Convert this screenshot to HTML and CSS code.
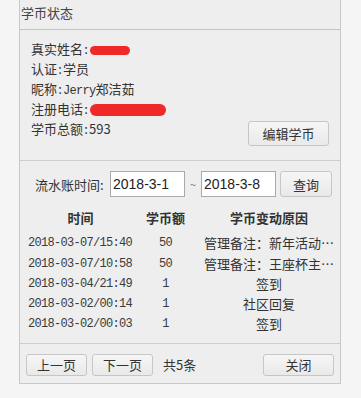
FILE: index.html
```html
<!DOCTYPE html>
<html lang="zh-CN">
<head>
    <meta charset="UTF-8">
    <title>学币状态</title>
    <link rel="stylesheet" href="styles.css">
</head>
<body>
    <div class="panel">
        <div class="panel-title">学币状态</div>
        <div class="info">
            <div class="info-list">
                <div class="info-row">真实姓名<span class="colon">:</span><span class="scribble scribble-name"></span></div>
                <div class="info-row">认证<span class="colon">:</span>学员</div>
                <div class="info-row">昵称<span class="colon">:</span><span class="latin">Jerry</span>郑洁茹</div>
                <div class="info-row">注册电话<span class="colon">:</span><span class="scribble scribble-phone"></span></div>
                <div class="info-row">学币总额<span class="colon">:</span>593</div>
            </div>
            <button class="btn btn-edit">编辑学币</button>
        </div>
        <div class="query">
            <span class="query-label">流水账时间:</span>
            <input class="date-input" type="text" value="2018-3-1">
            <span class="tilde">~</span>
            <input class="date-input" type="text" value="2018-3-8">
            <button class="btn btn-search">查询</button>
        </div>
        <div class="log">
            <div class="log-row log-head">
                <div class="col-time">时间</div>
                <div class="col-amount">学币额</div>
                <div class="col-reason">学币变动原因</div>
            </div>
            <div class="log-row">
                <div class="col-time mono">2018-03-07/15:40</div>
                <div class="col-amount mono">50</div>
                <div class="col-reason">管理备注：新年活动…</div>
            </div>
            <div class="log-row">
                <div class="col-time mono">2018-03-07/10:58</div>
                <div class="col-amount mono">50</div>
                <div class="col-reason">管理备注：王座杯主…</div>
            </div>
            <div class="log-row">
                <div class="col-time mono">2018-03-04/21:49</div>
                <div class="col-amount mono">1</div>
                <div class="col-reason">签到</div>
            </div>
            <div class="log-row">
                <div class="col-time mono">2018-03-02/00:14</div>
                <div class="col-amount mono">1</div>
                <div class="col-reason">社区回复</div>
            </div>
            <div class="log-row">
                <div class="col-time mono">2018-03-02/00:03</div>
                <div class="col-amount mono">1</div>
                <div class="col-reason">签到</div>
            </div>
        </div>
        <div class="pager">
            <button class="btn btn-page">上一页</button>
            <button class="btn btn-page">下一页</button>
            <span class="total">共5条</span>
            <button class="btn btn-close">关闭</button>
        </div>
    </div>
</body>
</html>
```

FILE: styles.css
```css
body {
    margin: 0;
    background-color: #f5f5f5;
    font-family: "Noto Sans CJK SC", sans-serif;
    font-size: 13px;
    color: #333;
}
.panel {
    margin-left: 19px;
    width: 320px;
    border: 1px solid #c8c8c8;
    border-top: none;
    background-color: #eeeeee;
}
.panel-title {
    height: 29px;
    line-height: 26px;
    padding-left: 1px;
    border-bottom: 1px solid #c4c4c4;
    color: #444;
}
.info {
    display: flex;
    justify-content: space-between;
    align-items: flex-end;
    padding: 9px 11px 14px 11px;
    border-bottom: 1px solid #cfcfcf;
}
.info-list {
    padding-bottom: 7px;
}
.info-row {
    height: 20px;
    line-height: 20px;
    white-space: nowrap;
}
.colon {
    display: inline-block;
    width: 6px;
    text-align: center;
}
.latin {
    font-family: "Liberation Mono", monospace;
    font-size: 12px;
    letter-spacing: -0.7px;
}
.scribble {
    display: inline-block;
    height: 9px;
    background-color: #f02828;
    border-radius: 5px;
    vertical-align: middle;
    margin-left: 1px;
}
.scribble-name {
    width: 40px;
}
.scribble-phone {
    width: 76px;
    height: 12px;
    border-radius: 6px;
}
.btn {
    font-family: "Noto Sans CJK SC", sans-serif;
    font-size: 13px;
    color: #333;
    background: linear-gradient(#f6f6f6, #e9e9e9);
    border: 1px solid #c6c6c6;
    border-radius: 3px;
    padding: 0;
}
.btn-edit {
    width: 81px;
    height: 25px;
}
.query {
    display: flex;
    align-items: center;
    padding: 10px 0 0 15px;
}
.query-label {
    width: 75px;
}
.date-input {
    width: 69px;
    height: 22px;
    padding: 1px 2px;
    border: 1px solid #a9a9a9;
    background-color: #fff;
    font-family: "Liberation Sans", sans-serif;
    font-size: 14px;
    color: #222;
}
.tilde {
    width: 16px;
    text-align: center;
    color: #777;
    font-size: 11px;
}
.btn-search {
    width: 52px;
    height: 26px;
    margin-left: 4px;
}
.log {
    padding: 11px 0 8px 8px;
}
.log-row {
    display: grid;
    grid-template-columns: 105px 65px 142px;
    height: 20.25px;
    line-height: 20px;
}
.log-head {
    font-weight: bold;
    margin-bottom: 5px;
}
.col-time,
.col-amount,
.col-reason {
    text-align: center;
    white-space: nowrap;
    overflow: hidden;
}
.mono {
    font-family: "Liberation Mono", monospace;
    font-size: 12px;
    letter-spacing: -0.7px;
    color: #3a3a3a;
}
.col-time.mono {
    text-align: left;
}
.pager {
    display: flex;
    align-items: center;
    border-top: 1px solid #cfcfcf;
    padding: 10px 6px 7px 6px;
}
.btn-page {
    width: 61px;
    height: 22px;
    margin-right: 5px;
}
.total {
    margin-left: 5px;
}
.btn-close {
    width: 71px;
    height: 22px;
    margin-left: auto;
}
```
